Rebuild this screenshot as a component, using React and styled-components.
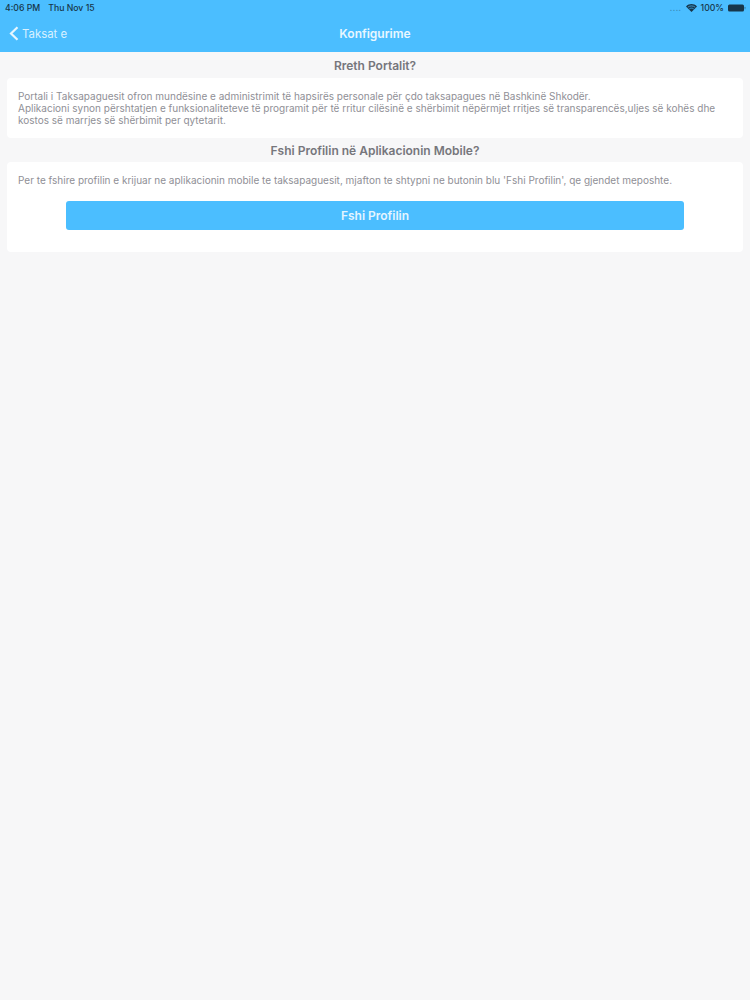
import React from "react";
import styled, { createGlobalStyle } from "styled-components";

const Global = createGlobalStyle`
  html, body { margin: 0; padding: 0; height: 100%; background: #f7f7f8; }
  body { font-family: Inter, "Liberation Sans", sans-serif; }
  * { box-sizing: border-box; }
`;
const Page = styled.div`
  width: 750px;
  height: 1000px;
  background: #f7f7f8;
  overflow: hidden;
`;
const Header = styled.header`
  height: 52px;
  background: #4bbeff;
  padding-top: 1px;
`;
const StatusBar = styled.div`
  height: 14px;
  padding: 0 4px 0 5px;
  display: flex;
  align-items: center;
  justify-content: space-between;
  font-size: 8.7px;
  font-weight: 500;
  color: #17364a;
`;
const StatusGroup = styled.div`
  display: flex;
  align-items: center;
  gap: ${(p) => p.$gap || 4}px;
`;
const Signal = styled.span`
  color: #3b8dba;
  font-size: 8px;
  letter-spacing: 0.5px;
`;
const Nav = styled.nav`
  height: 36px;
  position: relative;
  display: flex;
  align-items: center;
  justify-content: center;
  color: #fff;
`;
const Back = styled.div`
  position: absolute;
  left: 9px;
  top: 11px;
  display: flex;
  align-items: center;
  gap: 3px;
  font-size: 11.4px;
  color: #d8f1ff;
`;
const NavTitle = styled.div`
  font-size: 12px;
  font-weight: 600;
  color: #e8f7ff;
`;
const Content = styled.main`
  padding: 0 7px;
`;
const SectionTitle = styled.h2`
  margin: 0;
  height: ${(p) => p.$h}px;
  display: flex;
  align-items: center;
  justify-content: center;
  font-size: 12px;
  font-weight: 600;
  color: #76767c;
`;
const Card = styled.section`
  background: #fff;
  border-radius: 4px;
  padding: ${(p) => p.$pad};
  height: ${(p) => p.$h}px;
`;
const Para = styled.p`
  margin: 0;
  font-size: 10px;
  line-height: 12px;
  color: #8f8f96;
  white-space: nowrap;
`;
const Button = styled.button`
  display: block;
  width: 618px;
  height: 29px;
  margin: 15px auto 0;
  border: 0;
  border-radius: 3px;
  background: #4bbeff;
  color: #e4f5ff;
  font: 600 12px Inter, "Liberation Sans", sans-serif;
`;

export default function App() {
  return (
    <Page>
      <Global />
      <Header>
        <StatusBar>
          <StatusGroup $gap={8}>
            <span>4:06 PM</span>
            <span>Thu Nov 15</span>
          </StatusGroup>
          <StatusGroup>
            <Signal>....</Signal>
            <svg width="11" height="8" viewBox="0 0 11 8" aria-hidden="true">
              <path d="M5.5 8 0 2.4C3.2-.8 7.8-.8 11 2.4Z" fill="#17364a" />
              <path d="M1.8 3.2C3.9 1.5 7.1 1.5 9.2 3.2" stroke="#4bbeff" strokeWidth=".7" fill="none" />
              <path d="M3.3 4.9C4.6 3.9 6.4 3.9 7.7 4.9" stroke="#4bbeff" strokeWidth=".7" fill="none" />
            </svg>
            <span>100%</span>
            <svg width="18" height="8" viewBox="0 0 18 8" aria-hidden="true">
              <rect x="0" y="0.5" width="16" height="7" rx="1.5" fill="#17364a" />
              <rect x="16.4" y="2.8" width="1.2" height="2.4" rx=".5" fill="#3b8dba" />
            </svg>
          </StatusGroup>
        </StatusBar>
        <Nav>
          <Back>
            <svg width="10" height="15" viewBox="0 0 10 15" aria-hidden="true">
              <path d="M8.5 1.2 2 7.5l6.5 6.3" stroke="#e6f6ff" strokeWidth="2.2" fill="none" />
            </svg>
            <span>Taksat e</span>
          </Back>
          <NavTitle>Konfigurime</NavTitle>
        </Nav>
      </Header>
      <Content>
        <SectionTitle $h={26}>Rreth Portalit?</SectionTitle>
        <Card $h={60} $pad="12px 11px 0">
          <Para>Portali i Taksapaguesit ofron mundësine e administrimit të hapsirës personale për çdo taksapagues në Bashkinë Shkodër.</Para>
          <Para>Aplikacioni synon përshtatjen e funksionaliteteve të programit për të rritur cilësinë e shërbimit nëpërmjet rritjes së transparencës,uljes së kohës dhe</Para>
          <Para>kostos së marrjes së shërbimit per qytetarit.</Para>
        </Card>
        <SectionTitle $h={24}>Fshi Profilin në Aplikacionin Mobile?</SectionTitle>
        <Card $h={90} $pad="12px 11px 0">
          <Para>Per te fshire profilin e krijuar ne aplikacionin mobile te taksapaguesit, mjafton te shtypni ne butonin blu 'Fshi Profilin', qe gjendet meposhte.</Para>
          <Button>Fshi Profilin</Button>
        </Card>
      </Content>
    </Page>
  );
}
